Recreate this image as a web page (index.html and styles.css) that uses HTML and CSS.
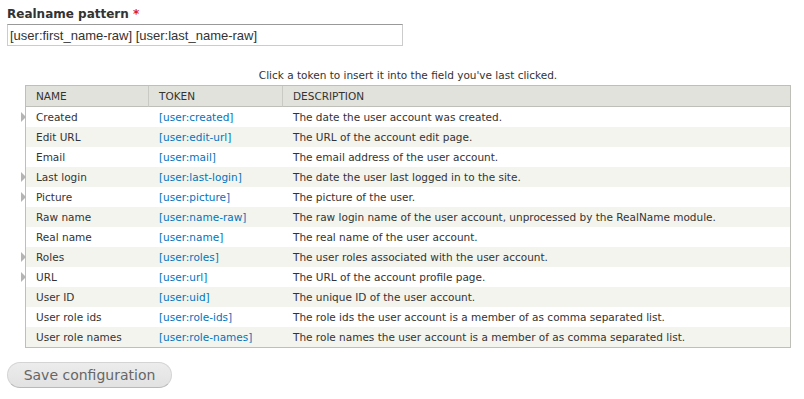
FILE: index.html
```html
<!DOCTYPE html>
<html>
<head>
<meta charset="utf-8">
<link rel="stylesheet" href="styles.css">
</head>
<body>
<div class="page">
  <label class="field-label" for="pattern">Realname pattern <span class="req">*</span></label>
  <input id="pattern" class="text-input" type="text" value="[user:first_name-raw] [user:last_name-raw]">
  <div class="tokens">
    <p class="help">Click a token to insert it into the field you've last clicked.</p>
    <table class="token-table">
      <colgroup><col class="c1"><col class="c2"><col class="c3"></colgroup>
      <thead>
        <tr><th>NAME</th><th>TOKEN</th><th class="last">DESCRIPTION</th></tr>
      </thead>
      <tbody>
        <tr class="exp"><td>Created</td><td class="tok">[user:created]</td><td>The date the user account was created.</td></tr>
        <tr class="even"><td>Edit URL</td><td class="tok">[user:edit-url]</td><td>The URL of the account edit page.</td></tr>
        <tr><td>Email</td><td class="tok">[user:mail]</td><td>The email address of the user account.</td></tr>
        <tr class="even exp"><td>Last login</td><td class="tok">[user:last-login]</td><td>The date the user last logged in to the site.</td></tr>
        <tr class="exp"><td>Picture</td><td class="tok">[user:picture]</td><td>The picture of the user.</td></tr>
        <tr class="even"><td>Raw name</td><td class="tok">[user:name-raw]</td><td>The raw login name of the user account, unprocessed by the RealName module.</td></tr>
        <tr><td>Real name</td><td class="tok">[user:name]</td><td>The real name of the user account.</td></tr>
        <tr class="even exp"><td>Roles</td><td class="tok">[user:roles]</td><td>The user roles associated with the user account.</td></tr>
        <tr class="exp"><td>URL</td><td class="tok">[user:url]</td><td>The URL of the account profile page.</td></tr>
        <tr class="even"><td>User ID</td><td class="tok">[user:uid]</td><td>The unique ID of the user account.</td></tr>
        <tr><td>User role ids</td><td class="tok">[user:role-ids]</td><td>The role ids the user account is a member of as comma separated list.</td></tr>
        <tr class="even"><td>User role names</td><td class="tok">[user:role-names]</td><td>The role names the user account is a member of as comma separated list.</td></tr>
      </tbody>
    </table>
  </div>
  <button class="btn" type="button">Save configuration</button>
</div>
</body>
</html>
```
FILE: styles.css
```css
html, body {
  margin: 0;
  padding: 0;
  background: #fff;
}
body {
  font-family: "DejaVu Sans", Verdana, sans-serif;
  color: #333;
}
.page {
  padding: 6px 7px 0 7px;
}
.field-label {
  display: block;
  font-weight: bold;
  font-size: 12px;
  line-height: 16px;
  color: #333;
  margin-bottom: 2px;
}
.req {
  color: #e02020;
}
.text-input {
  display: block;
  box-sizing: border-box;
  width: 396px;
  height: 22px;
  margin: 0;
  padding: 0 2px;
  border: 1px solid #ccc;
  border-top-color: #999;
  font-family: "Liberation Sans", Arial, sans-serif;
  font-size: 13px;
  color: #333;
  outline: none;
}
.tokens {
  margin-left: 18px;
  width: 766px;
}
.help {
  margin: 22px 0 3px 0;
  font-size: 10.5px;
  line-height: 14px;
  text-align: center;
  color: #333;
}
.token-table {
  width: 766px;
  table-layout: fixed;
  border-collapse: separate;
  border-spacing: 0;
  border: 1px solid #bebfb9;
  font-size: 10.5px;
}
.c1 { width: 123px; }
.c2 { width: 134px; }
.token-table th {
  background: #e1e2dc;
  text-align: left;
  font-weight: normal;
  height: 20px;
  padding: 0 0 0 10px;
  line-height: 20px;
  border-bottom: 1px solid #bebfb9;
  border-right: 1px solid #c9cac4;
  color: #333;
}
.token-table th.last {
  border-right: none;
}
.token-table td {
  height: 20px;
  padding: 0 0 0 10px;
  line-height: 20px;
  white-space: nowrap;
  overflow: hidden;
  background: #fff;
}
.token-table td:first-child {
  position: relative;
  overflow: visible;
}
.token-table tr.even td {
  background: #f3f4ee;
}
.token-table td.tok {
  color: #0074bd;
}
.token-table tr.exp td:first-child::before {
  content: "";
  position: absolute;
  left: -5px;
  top: 5px;
  border-style: solid;
  border-width: 5px 0 5px 5px;
  border-color: transparent transparent transparent #b4b4b4;
}
.btn {
  display: block;
  margin-top: 14px;
  box-sizing: border-box;
  width: 165px;
  height: 26px;
  padding: 0;
  border: 1px solid #d4d4d4;
  border-bottom-color: #b9b9b9;
  border-radius: 13px;
  background: linear-gradient(#ececec, #e2e2e2);
  font-family: "DejaVu Sans", Verdana, sans-serif;
  font-size: 14px;
  color: #666;
}
```
